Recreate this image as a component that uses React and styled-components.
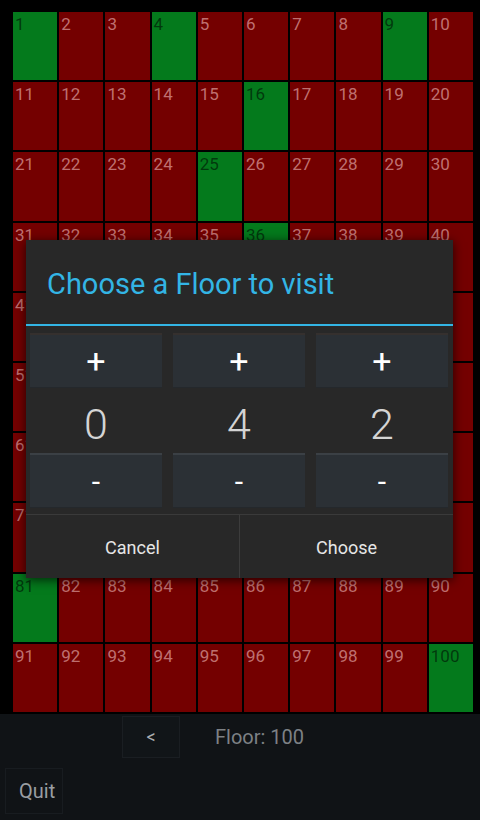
import React from 'react';
import styled, { createGlobalStyle } from 'styled-components';

const GlobalStyle = createGlobalStyle`
    html, body {
        margin: 0;
        padding: 0;
        background: #101316;
    }
    body {
        font-family: Roboto, "Noto Sans", "Liberation Sans", sans-serif;
    }
`;

const Screen = styled.div`
    position: relative;
    width: 480px;
    height: 820px;
    display: flex;
    flex-flow: column;
    background: #101316;
    overflow: hidden;
`;

const Board = styled.div`
    background: #000;
    padding: 12px 7px 2px 13px;
    display: grid;
    grid-template-columns: repeat(10, 1fr);
    grid-auto-rows: 68.2px;
    gap: 2px;
`;

const Cell = styled.div`
    background: ${p => (p.$visited ? '#047a1c' : '#740000')};
    color: ${p => (p.$visited ? 'rgba(0, 0, 0, 0.55)' : 'rgba(255, 210, 210, 0.55)')};
    font-size: 17px;
    line-height: 20px;
    padding: 2px 0 0 2px;
`;

const NavRow = styled.div`
    display: flex;
    align-items: center;
    height: 46px;
    padding-left: 122px;
`;

const BackButton = styled.div`
    width: 56px;
    height: 40px;
    border: 1px solid #1a1e22;
    background: #111518;
    color: #a9adb0;
    font-size: 18px;
    display: flex;
    align-items: center;
    justify-content: center;
`;

const FloorLabel = styled.div`
    margin-left: 35px;
    color: #7d8185;
    font-size: 20px;
`;

const QuitRow = styled.div`
    padding: 8px 0 0 5px;
`;

const QuitButton = styled.div`
    width: 58px;
    height: 46px;
    border: 1px solid #181c20;
    display: flex;
    align-items: center;
    padding-left: 13px;
    box-sizing: border-box;
    color: #9a9ea2;
    font-size: 20px;
`;

const Dialog = styled.div`
    position: absolute;
    left: 26px;
    top: 240px;
    width: 427px;
    height: 338px;
    background: #282828;
    box-shadow: 0 2px 10px rgba(0, 0, 0, 0.7);
    display: flex;
    flex-flow: column;
`;

const DialogTitle = styled.div`
    height: 86px;
    display: flex;
    align-items: center;
    padding-left: 21px;
    color: #33b5e5;
    font-size: 29px;
    border-bottom: 2px solid #33b5e5;
    box-sizing: border-box;
    padding-top: 4px;
`;

const Pickers = styled.div`
    display: grid;
    grid-template-columns: repeat(3, 132px);
    justify-content: space-between;
    padding: 7px 5px 0 4px;
    height: 188px;
    box-sizing: border-box;
`;

const Picker = styled.div`
    display: flex;
    flex-flow: column;
`;

const StepButton = styled.div`
    height: 55px;
    box-sizing: border-box;
    background: #2b3035;
    border-top: 2px solid ${p => (p.$minus ? '#3b4045' : '#35302e')};
    border-bottom: 1px solid #24282c;
    color: #fff;
    font-size: ${p => (p.$minus ? '30px' : '34px')};
    font-weight: 400;
    display: flex;
    align-items: center;
    justify-content: center;
`;

const Value = styled.div`
    height: 65px;
    padding-top: 6px;
    box-sizing: border-box;
    display: flex;
    align-items: center;
    justify-content: center;
    color: #d4d4d4;
    font-size: 43px;
    font-weight: 300;
`;

const ButtonBar = styled.div`
    flex: 1;
    display: flex;
    border-top: 1px solid #3a3a3a;
`;

const BarButton = styled.div`
    flex: 1;
    display: flex;
    align-items: center;
    justify-content: center;
    color: #e6e6e6;
    font-size: 18px;
    padding-top: 2px;
    & + & {
        border-left: 1px solid #3c3c3c;
    }
`;

const visited = new Set([1, 4, 9, 16, 25, 36, 49, 64, 81, 100]);

const App = () => {
    const floors = Array.from({ length: 100 }, (_, i) => i + 1);
    const digits = [0, 4, 2];
    return (
        <Screen>
            <GlobalStyle />
            <Board>
                {floors.map(n => (
                    <Cell key={n} $visited={visited.has(n)}>{n}</Cell>
                ))}
            </Board>
            <NavRow>
                <BackButton>&lt;</BackButton>
                <FloorLabel>Floor: 100</FloorLabel>
            </NavRow>
            <QuitRow>
                <QuitButton>Quit</QuitButton>
            </QuitRow>
            <Dialog>
                <DialogTitle>Choose a Floor to visit</DialogTitle>
                <Pickers>
                    {digits.map((d, i) => (
                        <Picker key={i}>
                            <StepButton>+</StepButton>
                            <Value>{d}</Value>
                            <StepButton $minus>-</StepButton>
                        </Picker>
                    ))}
                </Pickers>
                <ButtonBar>
                    <BarButton>Cancel</BarButton>
                    <BarButton>Choose</BarButton>
                </ButtonBar>
            </Dialog>
        </Screen>
    );
};

export default App;
